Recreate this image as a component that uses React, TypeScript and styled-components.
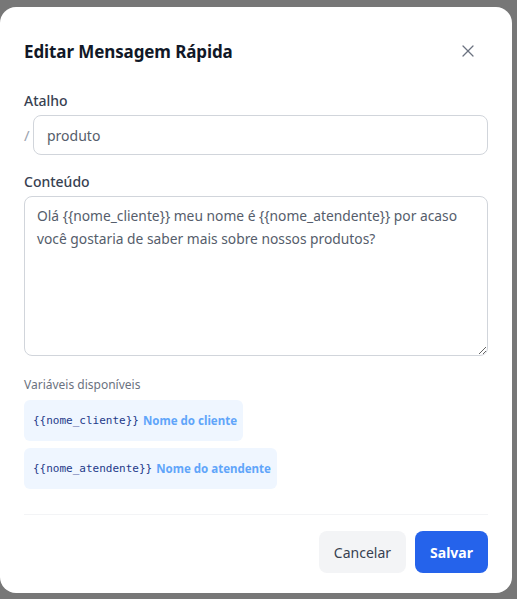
import React from 'react';
import styled, { createGlobalStyle } from 'styled-components';
import { X } from 'lucide-react';

const GlobalStyle = createGlobalStyle`
    html, body {
        margin: 0;
        padding: 0;
        background: #777777;
        font-family: 'Noto Sans', 'Open Sans', sans-serif;
    }
`;

const variables = [
    { key: '{{nome_cliente}}', label: 'Nome do cliente' },
    { key: '{{nome_atendente}}', label: 'Nome do atendente' },
];

const App = () => {
    return (
        <>
            <GlobalStyle />
            <Backdrop>
                <Modal>
                    <Header>
                        <Title>Editar Mensagem Rápida</Title>
                        <CloseButton aria-label="Fechar">
                            <X size={20} strokeWidth={1.5} />
                        </CloseButton>
                    </Header>

                    <Field>
                        <Label>Atalho</Label>
                        <ShortcutRow>
                            <Slash>/</Slash>
                            <Input defaultValue="produto" />
                        </ShortcutRow>
                    </Field>

                    <Field>
                        <Label>Conteúdo</Label>
                        <TextArea
                            defaultValue="Olá {{nome_cliente}} meu nome é {{nome_atendente}} por acaso você gostaria de saber mais sobre nossos produtos?"
                        />
                    </Field>

                    <Variables>
                        <Hint>Variáveis disponíveis</Hint>
                        {variables.map(v => (
                            <Chip key={v.key}>
                                <Code>{v.key}</Code>
                                <ChipLabel>{v.label}</ChipLabel>
                            </Chip>
                        ))}
                    </Variables>

                    <Footer>
                        <Button variant="secondary">Cancelar</Button>
                        <Button variant="primary">Salvar</Button>
                    </Footer>
                </Modal>
            </Backdrop>
        </>
    );
};

const Backdrop = styled.div`
    min-height: 599px;
    padding-top: 7px;
    box-sizing: border-box;
`;

const Modal = styled.div`
    width: 512px;
    height: 586px;
    box-sizing: border-box;
    background: #ffffff;
    border-radius: 16px;
    padding: 24px 24px 20px;
    display: flex;
    flex-direction: column;
`;

const Header = styled.div`
    display: flex;
    align-items: center;
    justify-content: space-between;
    height: 40px;
    margin-bottom: 20px;
`;

const Title = styled.h2`
    margin: 0;
    font-size: 17px;
    font-weight: 700;
    color: #111827;
    letter-spacing: -0.1px;
`;

const CloseButton = styled.button`
    border: none;
    background: none;
    padding: 0;
    margin-right: 10px;
    color: #6b7280;
    display: flex;
    cursor: pointer;
`;

const Field = styled.div`
    display: flex;
    flex-direction: column;
    gap: 4px;
    margin-bottom: 17px;
`;

const Label = styled.label`
    font-size: 14px;
    font-weight: 500;
    color: #374151;
    line-height: 20px;
`;

const ShortcutRow = styled.div`
    display: flex;
    align-items: center;
    gap: 3px;
`;

const Slash = styled.span`
    color: #9ca3af;
    font-size: 15px;
    width: 6px;
`;

const Input = styled.input`
    flex: 1;
    height: 40px;
    box-sizing: border-box;
    border: 1px solid #d1d5db;
    border-radius: 8px;
    padding: 0 13px;
    font-family: inherit;
    font-size: 14px;
    color: #555d6b;
    outline: none;
`;

const TextArea = styled.textarea`
    height: 160px;
    box-sizing: border-box;
    border: 1px solid #d1d5db;
    border-radius: 8px;
    padding: 7px 12px;
    font-family: inherit;
    font-size: 13.8px;
    line-height: 23px;
    color: #555d6b;
    resize: vertical;
    outline: none;
`;

const Variables = styled.div`
    display: flex;
    flex-direction: column;
    align-items: flex-start;
    gap: 7px;
    margin-top: 4px;
`;

const Hint = styled.span`
    font-size: 12px;
    color: #6b7280;
    line-height: 16px;
`;

const Chip = styled.div`
    display: flex;
    align-items: center;
    gap: 4px;
    background: #eff6ff;
    border-radius: 6px;
    padding: 12px 6px 12px 9px;
    line-height: 17px;
`;

const Code = styled.code`
    font-family: 'DejaVu Sans Mono', 'Liberation Mono', monospace;
    font-size: 11px;
    color: #1e3a8a;
`;

const ChipLabel = styled.span`
    font-size: 11.5px;
    font-weight: 700;
    color: #60a5fa;
`;

const Footer = styled.div`
    margin-top: auto;
    border-top: 1px solid #f3f4f6;
    padding-top: 16px;
    display: flex;
    justify-content: flex-end;
    gap: 9px;
`;

const Button = styled.button<{ variant: 'primary' | 'secondary' }>`
    height: 42px;
    border: none;
    border-radius: 8px;
    padding: 0 15px;
    font-family: inherit;
    font-size: 14px;
    font-weight: ${props => (props.variant === 'primary' ? 700 : 400)};
    background: ${props => (props.variant === 'primary' ? '#2563eb' : '#f3f4f6')};
    color: ${props => (props.variant === 'primary' ? '#ffffff' : '#374151')};
    cursor: pointer;
`;

export default App;
